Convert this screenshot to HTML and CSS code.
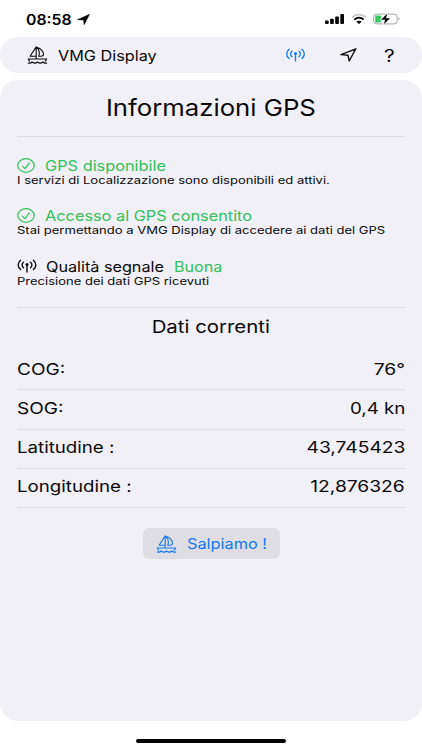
FILE: index.html
```html
<!DOCTYPE html>
<html lang="it">
<head>
<meta charset="utf-8">
<title>VMG Display</title>
<link rel="stylesheet" href="styles.css">
</head>
<body>
<svg class="defs" width="0" height="0" aria-hidden="true">
  <symbol id="boat" viewBox="0 0 20 18">
    <g fill="none" stroke="currentColor" stroke-width="1.100" stroke-linecap="round" stroke-linejoin="round">
      <path d="M8.700 .7V13M8.700 .9L2.600 10.200h6M9 1.200c4 .8 7 3.800 7 7.200 0 1.200-1.200 1.900-4.200 1.900M9 1.200c2.600 2.400 3.500 6 2.200 9.100M.8 13h18.400l-1.400 2.200M.8 13l1.200 2.200"/>
      <path d="M.8 16.900c1.500.5 2.700.3 3.900-.9 1.500 1.300 3.700 1.300 5.300 0 1.600 1.300 3.800 1.300 5.300 0 1.200 1.200 2.400 1.400 3.900.9"/>
    </g>
  </symbol>
  <symbol id="antenna" viewBox="0 0 20 14">
    <g fill="none" stroke="currentColor" stroke-width="1.350" stroke-linecap="round">
      <path d="M3.600 1.200C.4 4 .4 7.800 3.600 10.600M16.400 1.200c3.200 2.800 3.200 6.600 0 9.400M6.500 3.200c-1.900 1.700-1.900 3.800 0 5.500M13.500 3.200c1.900 1.700 1.900 3.800 0 5.500M10 6v7"/>
    </g>
    <circle cx="10" cy="5.500" r="1.500" fill="currentColor"/>
  </symbol>
  <symbol id="check" viewBox="0 0 18 15">
    <g fill="none" stroke="currentColor" stroke-width="1.200" stroke-linecap="round" stroke-linejoin="round">
      <ellipse cx="9" cy="7.500" rx="8.200" ry="6.800"/>
      <path d="M5.600 8.100l2.500 2.500 4.200-5.800"/>
    </g>
  </symbol>
</svg>

<header class="status">
  <span class="t time">08:58</span>
  <svg class="loc" viewBox="0 0 13 11"><path d="M.4 5.700L12.500.3 7.200 10.700 6.600 5.900z" fill="#000" stroke="#000" stroke-width=".5" stroke-linejoin="round"/></svg>
  <svg class="signal" viewBox="0 0 19 10"><rect x="0" y="6.500" width="3.700" height="3.500" rx="1"/><rect x="5.100" y="4.700" width="3.700" height="5.300" rx="1"/><rect x="10.200" y="2.400" width="3.700" height="7.600" rx="1"/><rect x="15.300" y="0" width="3.700" height="10" rx="1"/></svg>
  <svg class="wifi" viewBox="0 0 16 10"><path d="M1 3.300C5-.2 11-.2 15 3.300" fill="none" stroke="#c5c5c7" stroke-width="1.700"/><path d="M3.300 5.500c2.800-2.200 6.600-2.200 9.400 0" fill="none" stroke="#000" stroke-width="1.800"/><path d="M5.300 7.700c1.700-1.300 3.700-1.300 5.400 0L8 10z"/></svg>
  <svg class="battery" viewBox="0 0 28 12"><rect x=".6" y="1.100" width="23.600" height="9.800" rx="3.200" fill="#fff" stroke="#a5a5a8"/><rect x="2.200" y="2.600" width="6" height="6.800" rx="1.200" fill="#34c759"/><path d="M25.500 4.300c1.400.5 1.400 2.900 0 3.400z" fill="#a5a5a8"/><path d="M14.200.8L8 6.700h4.200l-1.500 4.500L17.200 5.300H13z" stroke="#fff" stroke-width="1.200" paint-order="stroke"/></svg>
</header>

<nav class="bar">
  <svg class="boat"><use href="#boat"/></svg>
  <span class="t brand">VMG Display</span>
  <svg class="antenna blue"><use href="#antenna"/></svg>
  <svg class="arrow" viewBox="0 0 17 14"><path d="M1 6.600L15.800.8 9.200 13 8 7.200z" fill="none" stroke="#111" stroke-width="1.400" stroke-linejoin="round"/></svg>
  <span class="t help">?</span>
</nav>

<main class="card">
  <h1><span class="t title">Informazioni GPS</span></h1>
  <section class="checks">
    <article class="item">
      <div class="line green"><svg class="check"><use href="#check"/></svg><span class="t lead">GPS disponibile</span></div>
      <p><span class="t note">I servizi di Localizzazione sono disponibili ed attivi.</span></p>
    </article>
    <article class="item">
      <div class="line green"><svg class="check"><use href="#check"/></svg><span class="t lead">Accesso al GPS consentito</span></div>
      <p><span class="t note">Stai permettando a VMG Display di accedere ai dati del GPS</span></p>
    </article>
    <article class="item">
      <div class="line"><svg class="antenna small"><use href="#antenna"/></svg><span class="t lead">Qualità segnale</span><span class="t green good">Buona</span></div>
      <p><span class="t note">Precisione dei dati GPS ricevuti</span></p>
    </article>
  </section>
  <h2><span class="t subtitle">Dati correnti</span></h2>
  <dl>
    <div class="row"><dt class="t short">COG:</dt><dd class="t">76°</dd></div>
    <div class="row"><dt class="t short">SOG:</dt><dd class="t speed">0,4 kn</dd></div>
    <div class="row"><dt class="t">Latitudine :</dt><dd class="t">43,745423</dd></div>
    <div class="row"><dt class="t">Longitudine :</dt><dd class="t">12,876326</dd></div>
  </dl>
  <button class="go"><svg class="boat"><use href="#boat"/></svg><span class="t go-text">Salpiamo !</span></button>
</main>
<div class="home"></div>
</body>
</html>
```
FILE: styles.css
```css
* { box-sizing: border-box; }
body {
  margin: 0;
  width: 422px;
  height: 750px;
  overflow: hidden;
  background: #fff;
  color: #09090b;
  font-family: Inter, "Liberation Sans", sans-serif;
  display: flex;
  flex-direction: column;
}
h1, h2, p, dl, dd { margin: 0; font-weight: 400; }
svg { display: block; flex: none; }
.defs { position: absolute; }

/* Wide lettering: every label is stretched from its left edge by --w. */
.t {
  display: inline-block;
  white-space: nowrap;
  transform: scaleX(var(--w, 1.2));
  transform-origin: left center;
}
.green { color: #34c05a; }
.blue { color: #1479f2; }

.status { height: 37px; flex: none; display: flex; align-items: center; padding: 1px 21px 0 26px; }
.time { --w: 1.13; width: 51px; font-size: 14px; font-weight: 600; color: #000; }
.loc { width: 13px; height: 11px; margin-right: auto; }
.signal { width: 19px; height: 10px; margin-right: 7px; }
.wifi { width: 16px; height: 10px; margin-right: 6px; }
.battery { width: 28px; height: 12px; }

.bar {
  height: 36px;
  flex: none;
  border-radius: 18px;
  background: #f1f0f6;
  display: flex;
  align-items: center;
  padding: 0 0 0 27px;
}
.boat { width: 21px; height: 18px; }
.brand { --w: 1.12; margin-left: 10px; width: 227px; font-size: 14.500px; }
.antenna { width: 21px; height: 14px; }
.arrow { width: 17px; height: 14px; margin-left: 34px; }
.help { margin-left: 27px; font-size: 17.500px; }

.card {
  margin-top: 7px;
  height: 641px;
  flex: none;
  border-radius: 18px;
  background: #f1f0f6;
  padding: 0 17px;
  display: flex;
  flex-direction: column;
}
h1 { height: 57px; border-bottom: 1px solid #dedde3; text-align: center; line-height: 56px; font-size: 23px; }
.title { --w: 1.118; transform-origin: center; }
.subtitle { --w: 1.165; transform-origin: center; }
.checks { height: 171px; border-bottom: 1px solid #dedde3; padding-top: 19px; }
.item { height: 50.300px; }
.line { height: 19px; display: flex; align-items: center; font-size: 14.300px; line-height: 19px; }
.check { width: 18px; height: 15px; }
.small { width: 20px; }
.lead { --w: 1.141; margin-left: 10px; }
.good { --w: 1.13; }
.small + .lead { --w: 1.133; margin-left: 9px; width: 128px; }
.item p { height: 12px; font-size: 10.500px; line-height: 12px; }
.note { --w: 1.24; display: block; width: fit-content; }
h2 { height: 43px; line-height: 37px; font-size: 17.500px; text-align: center; }
.row {
  --w: 1.168;
  height: 39.250px;
  padding-bottom: 3px;
  border-bottom: 1px solid #dedde3;
  display: flex;
  justify-content: space-between;
  align-items: center;
  font-size: 16px;
}
.short { --w: 1.19; }
dd.t { --w: 1.2; transform-origin: right center; }
dd.speed { --w: 1.17; }

.go {
  align-self: center;
  margin: 20px 0 0;
  width: 137px;
  height: 31px;
  border: 0;
  border-radius: 6px;
  background: #dddde3;
  color: #1479f2;
  font: 14.300px Inter, "Liberation Sans", sans-serif;
  display: flex;
  align-items: center;
  padding: 0 0 0 13px;
}
.go-text { --w: 1.14; margin-left: 10px; }
.home { width: 150px; height: 4px; border-radius: 2px; background: #000; margin: 18px auto 0; flex: none; }
```
